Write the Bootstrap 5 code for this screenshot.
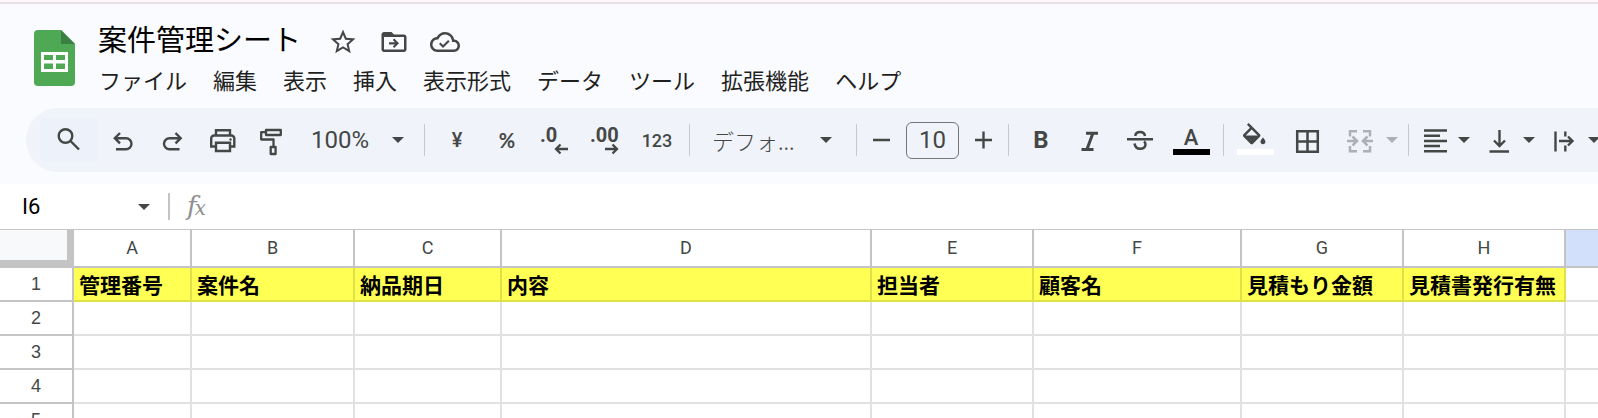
<!DOCTYPE html>
<html lang="ja">
<head>
<meta charset="utf-8">
<meta name="viewport" content="width=device-width, initial-scale=1">
<title>案件管理シート</title>
<link href="https://cdn.jsdelivr.net/npm/bootstrap@5.3.0/dist/css/bootstrap.min.css" rel="stylesheet">
<style>
  :root { --ink: #444746; --line: #c4c4c4; --grid: #e1e1e1; }
  body { font-family: Roboto, "Noto Sans CJK JP", sans-serif; height: 100vh; background: #fff; color: #1f1f1f; }
  button { border: 0; background: none; padding: 0; color: inherit; }
  svg { display: block; overflow: visible; flex: none; }
  .topline { height: 4px; background: #fdf6fa; border-bottom: 2px solid #eadfe5; }
  .app-head { background: #fafbfe; padding-bottom: 12px; }
  .doc-head { padding: 14px 34px 11px; gap: 23px; }
  .doc-title { font-family: "Noto Sans CJK JP", sans-serif; font-size: 29px; line-height: 40px; font-weight: 400; margin: 0 27px 0 0; color: #000; }
  .doc-icons { gap: 21px; color: var(--ink); }
  .menus { gap: 26px; height: 36px; padding-left: 1px; margin-top: 3px; }
  .menus button { font-family: "Noto Sans CJK JP", sans-serif; font-size: 22px; line-height: 36px; white-space: nowrap; }
  .tools { height: 64px; margin-left: 26px; padding-left: 14px; background: #f0f3f9; border-radius: 32px 0 0 32px; color: var(--ink); }
  .tools > * { flex: none; }
  .tool { width: 50px; height: 44px; display: flex; align-items: center; justify-content: center; font-size: 20px; font-weight: 500; }
  .tool-search { width: 58px; background: #edf1fa; border-radius: 4px; }
  .tool-step { width: 35px; }
  .tool-b { font-size: 24px; font-weight: 700; }
  .tool-pct { font-family: Lato, sans-serif; font-weight: 700; }
  .tool-num { font-size: 18px; }
  .divider { width: 1px; height: 32px; background: #c7c9cc; margin: 0 7px; }
  .drop { display: flex; align-items: center; justify-content: space-between; height: 44px; }
  .drop-zoom { width: 119px; padding: 0 13px; font-size: 24px; }
  .drop-font { width: 152px; padding: 0 17px 0 15px; font-family: "Noto Sans CJK JP", sans-serif; font-size: 22px; font-weight: 300; }
  .drop-merge { width: 70px; padding: 0 3px 0 14px; opacity: .38; }
  .drop-icon { width: 65px; padding: 0 11px 0 5px; }
  .caret { width: 0; height: 0; border: 6px solid transparent; border-top-color: var(--ink); border-bottom: 0; }
  .size-box { width: 53px; height: 37px; margin: 0 7px; border: 1px solid #747775; border-radius: 6px; background: none; text-align: center; font-size: 24px; color: var(--ink); padding: 0; }
  .formula { height: 46px; border-bottom: 1px solid var(--line); padding-left: 22px; }
  .cell-name { width: 116px; border: 0; padding: 0; font-size: 22px; color: #000; background: none; }
  .bar-sep { width: 2px; height: 27px; margin: 0 17px 0 18px; background: var(--line); }
  .fx { font: italic 26px/28px "DejaVu Serif", serif; color: #8f8f8f; }
  .fx span { font-size: 20px; margin-left: -2px; }
  .formula-text { border: 0; background: none; }
  .sheet { table-layout: fixed; width: 100%; border-collapse: separate; border-spacing: 0; color: #000; }
  .sheet th, .sheet td { border: 0 solid var(--grid); border-width: 0 2px 2px 0; height: 34px; padding: 0; overflow: hidden; white-space: nowrap; }
  .sheet th { border-color: var(--line); text-align: center; font-size: 18px; line-height: 24px; font-weight: 400; color: var(--ink); font-family: "Liberation Sans", sans-serif; }
  .sheet thead th { height: 38px; font-family: Roboto, sans-serif; }
  .sheet .corner { background: #f8f9fb; border-width: 0 7px 8px 0; }
  .sheet .picked { background: #d3e0fb; }
  .sheet tr > :last-child { border-right-width: 0; }
  .sheet .head-cell { background: #ffff54; border-color: #e0e048; font-family: "Noto Sans CJK JP", sans-serif; font-size: 21px; line-height: 24px; font-weight: 700; padding-left: 5px; }
  .w-n { width: 74px; } .w-a { width: 118px; } .w-b { width: 163px; } .w-c { width: 147px; }
  .w-d { width: 370px; } .w-e { width: 162px; } .w-f { width: 208px; }
</style>
</head>
<body class="overflow-hidden">
<div class="topline"></div>
<header class="app-head">
  <div class="doc-head d-flex align-items-center">
    <a href="#" aria-label="スプレッドシート ホーム">
      <svg width="41" height="56" viewBox="0 0 41 56">
        <path fill="#4fa954" d="M4 0H27L41 14V52a4 4 0 0 1-4 4H4a4 4 0 0 1-4-4V4a4 4 0 0 1 4-4z"/>
        <path fill="#3b8040" d="M27 0L41 14H27z"/>
        <path fill="#fff" fill-rule="evenodd" d="M7 22H34V42H7zM10 25V30H19V25zM22 25V30H31V25zM10 33.500V39H19V33.500zM22 33.500V39H31V33.500z"/>
      </svg>
    </a>
    <div>
      <div class="d-flex align-items-center">
        <h1 class="doc-title">案件管理シート</h1>
        <div class="doc-icons d-flex mt-2">
          <button type="button" aria-label="スター"><svg width="30" height="30" viewBox="0 0 24 24" fill="currentColor"><path d="M22 9.240l-7.190-.62L12 2 9.190 8.630 2 9.240l5.460 4.730L5.820 21 12 17.270 18.180 21l-1.630-7.030L22 9.240zM12 15.400l-3.760 2.270 1-4.280-3.320-2.880 4.380-.38L12 6.100l1.710 4.040 4.380.38-3.320 2.880 1 4.280L12 15.400z"/></svg></button>
          <button type="button" aria-label="移動"><svg width="30" height="30" viewBox="0 0 24 24" fill="currentColor"><path d="M20 6h-8l-2-2H4c-1.100 0-2 .9-2 2v12c0 1.100.9 2 2 2h16c1.100 0 2-.9 2-2V8c0-1.100-.9-2-2-2zm0 12H4V8h16v10zM12.200 16.800L16 13l-3.800-3.800-1.200 1.200 1.700 1.700H8v1.800h4.700L11 15.600z"/></svg></button>
          <button type="button" aria-label="保存状況"><svg width="30" height="30" viewBox="0 0 24 24" fill="currentColor"><path d="M19.350 10.040C18.670 6.590 15.640 4 12 4 9.110 4 6.610 5.640 5.360 8.040 2.350 8.360 0 10.900 0 14c0 3.310 2.690 6 6 6h13c2.760 0 5-2.240 5-5 0-2.640-2.050-4.780-4.650-4.960zM19 18H6c-2.210 0-4-1.790-4-4 0-2.050 1.530-3.760 3.560-3.970l1.070-.11.5-.95C8.080 7.140 9.940 6 12 6c2.620 0 4.880 1.860 5.390 4.430l.3 1.500 1.530.11c1.560.1 2.780 1.410 2.780 2.960 0 1.650-1.350 3-3 3zm-8.600-3.600l-2-2-1.200 1.200 3.200 3.200 5.300-5.300-1.200-1.200z"/></svg></button>
        </div>
      </div>
      <nav class="menus d-flex" aria-label="メニュー">
        <button type="button">ファイル</button><button type="button">編集</button><button type="button">表示</button><button type="button">挿入</button><button type="button">表示形式</button><button type="button">データ</button><button type="button">ツール</button><button type="button">拡張機能</button><button type="button">ヘルプ</button>
      </nav>
    </div>
  </div>

  <div class="tools d-flex align-items-center overflow-hidden" role="toolbar" aria-label="ツールバー">
    <button type="button" class="tool tool-search" aria-label="検索"><svg width="30" height="30" fill="none" stroke="currentColor" stroke-width="2.400"><circle cx="11.500" cy="11" r="6.800"/><path d="M16.500 16L25 24.500"/></svg></button>
    <button type="button" class="tool" aria-label="元に戻す"><svg width="30" height="30" fill="none" stroke="currentColor" stroke-width="2.400"><path d="M12 8L6.800 13.200L12 18.400M7 13.200H18a5.500 5.500 0 0 1 0 11H8"/></svg></button>
    <button type="button" class="tool" aria-label="やり直し"><svg width="30" height="30" fill="none" stroke="currentColor" stroke-width="2.400"><path d="M17.500 8L22.700 13.200L17.500 18.400M22.500 13.200H11.500a5.500 5.500 0 0 0 0 11H21.500"/></svg></button>
    <button type="button" class="tool" aria-label="印刷"><svg width="30" height="30" fill="none" stroke="currentColor" stroke-width="2.400"><path d="M8 10.500V5.200H22V10.500M8 21.500H3.200V13.500a3 3 0 0 1 3-3H23.300a3 3 0 0 1 3 3V21.500H22M8 17.800H22V26H8z"/><circle cx="22.500" cy="14.500" r="1.200" fill="currentColor" stroke="none"/></svg></button>
    <button type="button" class="tool" aria-label="書式をコピー"><svg width="30" height="30" fill="none" stroke="currentColor" stroke-width="2.300"><path d="M8 5H22.800V10H8zM8 7.200H3.200V14.500H15.500V21.500M12.700 22H17.600V29H12.700z" stroke-linejoin="round"/></svg></button>
    <button type="button" class="drop drop-zoom">100%<i class="caret"></i></button>
    <span class="divider"></span>
    <button type="button" class="tool">¥</button>
    <button type="button" class="tool tool-pct">%</button>
    <button type="button" class="tool" aria-label="小数点以下の桁数を減らす"><svg width="30" height="30"><text x="-2" y="17" font-size="20" font-weight="700" fill="currentColor">.0</text><path d="M26 24H14M18.500 19.500L14 24L18.500 28.500" fill="none" stroke="currentColor" stroke-width="2.300"/></svg></button>
    <button type="button" class="tool" aria-label="小数点以下の桁数を増やす"><svg width="30" height="30"><text x="-2" y="17" font-size="20" font-weight="700" fill="currentColor">.00</text><path d="M13 24H25M20.500 19.500L25 24L20.500 28.500" fill="none" stroke="currentColor" stroke-width="2.300"/></svg></button>
    <button type="button" class="tool tool-num">123</button>
    <span class="divider"></span>
    <button type="button" class="drop drop-font">デフォ...<i class="caret"></i></button>
    <span class="divider"></span>
    <button type="button" class="tool tool-step" aria-label="フォントサイズを縮小"><svg width="18" height="18"><path d="M0 9H17" stroke="currentColor" stroke-width="2.400"/></svg></button>
    <input class="size-box" type="text" value="10" aria-label="フォントサイズ">
    <button type="button" class="tool tool-step" aria-label="フォントサイズを拡大"><svg width="18" height="18"><path d="M0 9H17M8.500 .5V17.500" stroke="currentColor" stroke-width="2.400"/></svg></button>
    <span class="divider"></span>
    <button type="button" class="tool tool-b">B</button>
    <button type="button" class="tool" aria-label="斜体"><svg width="30" height="30" fill="none" stroke="currentColor" stroke-width="3"><path d="M10 8.300H22M5.500 24.500H17.500M17 8L10.700 25"/></svg></button>
    <button type="button" class="tool" aria-label="取り消し線"><svg width="30" height="30" fill="none" stroke="currentColor" stroke-width="2.500"><path d="M1 14.300H27M9.300 11C9.800 5.800 18.200 5.800 19 11M8.500 18.500C9.500 25.500 19.500 25.500 19.500 19.300C19.500 18.200 19 17.300 18 16.500"/></svg></button>
    <button type="button" class="tool" aria-label="テキストの色"><svg width="30" height="30"><text x="15" y="20" text-anchor="middle" font-size="22" font-weight="500" fill="currentColor">A</text><rect x="-3" y="24" width="37" height="6" fill="#000"/></svg></button>
    <span class="divider"></span>
    <button type="button" class="tool" aria-label="塗りつぶしの色"><svg width="30" height="30" fill="currentColor"><path transform="translate(-1.800 -2) scale(1.250)" d="M16.560 8.940L7.620 0 6.210 1.410l2.380 2.380-5.150 5.150c-.59.59-.59 1.540 0 2.120l5.500 5.500c.29.29.68.44 1.060.44s.77-.15 1.060-.44l5.500-5.500c.59-.58.59-1.530 0-2.120zM5.210 10L10 5.210 14.790 10H5.210zM19 11.500s-2 2.170-2 3.500c0 1.100.9 2 2 2s2-.9 2-2c0-1.330-2-3.500-2-3.500z"/><rect x="-4" y="24" width="37" height="6" fill="#fff"/></svg></button>
    <button type="button" class="tool" aria-label="枠線"><svg width="30" height="30" fill="none" stroke="currentColor" stroke-width="2.500"><path d="M6.200 6.200H26.800V26.800H6.200zM16.500 6V27M6 16.500H27"/></svg></button>
    <button type="button" class="drop drop-merge" aria-label="セルを結合"><svg width="30" height="30" fill="none" stroke="currentColor" stroke-width="2.500"><path d="M12 6.200H5V11.500M5 21V26.300H12M18 6.200H25V11.500M25 21V26.300H18M2 16H11M7.500 11.500L12 16L7.500 20.500M28 16H19M22.500 11.500L18 16L22.500 20.500"/></svg><i class="caret"></i></button>
    <span class="divider"></span>
    <button type="button" class="drop drop-icon" aria-label="水平方向の配置"><svg width="30" height="30" stroke="currentColor" stroke-width="2.500"><path d="M3 5.500H26M3 10.700H19M3 15.900H26M3 21.100H19M3 26.300H26"/></svg><i class="caret"></i></button>
    <button type="button" class="drop drop-icon" aria-label="垂直方向の配置"><svg width="30" height="30" fill="none" stroke="currentColor" stroke-width="2.400"><path d="M13.500 5V21M8 15.500L13.500 21L19 15.500M3.500 26.500H23"/></svg><i class="caret"></i></button>
    <button type="button" class="drop drop-icon" aria-label="テキストを折り返す"><svg width="30" height="30" fill="none" stroke="currentColor" stroke-width="2.400"><path d="M4.500 6.500V26.500M14.300 6.500V11.500M14.300 20.500V26.500M8 16H21M17 11.500L21.500 16L17 20.500"/></svg><i class="caret"></i></button>
  </div>
</header>

<div class="formula d-flex align-items-center">
  <input class="cell-name" type="text" value="I6" aria-label="名前ボックス">
  <button type="button" aria-label="名前の一覧"><i class="caret d-block"></i></button>
  <span class="bar-sep"></span>
  <label class="fx" for="formula">f<span>x</span></label>
  <input id="formula" class="formula-text flex-grow-1" type="text">
</div>

<table class="sheet">
  <colgroup><col class="w-n"><col class="w-a"><col class="w-b"><col class="w-c"><col class="w-d"><col class="w-e"><col class="w-f"><col class="w-e"><col class="w-e"><col></colgroup>
  <thead>
    <tr><th class="corner"></th><th>A</th><th>B</th><th>C</th><th>D</th><th>E</th><th>F</th><th>G</th><th>H</th><th class="picked"></th></tr>
  </thead>
  <tbody>
    <tr><th>1</th><td class="head-cell">管理番号</td><td class="head-cell">案件名</td><td class="head-cell">納品期日</td><td class="head-cell">内容</td><td class="head-cell">担当者</td><td class="head-cell">顧客名</td><td class="head-cell">見積もり金額</td><td class="head-cell">見積書発行有無</td><td></td></tr>
    <tr><th>2</th><td></td><td></td><td></td><td></td><td></td><td></td><td></td><td></td><td></td></tr>
    <tr><th>3</th><td></td><td></td><td></td><td></td><td></td><td></td><td></td><td></td><td></td></tr>
    <tr><th>4</th><td></td><td></td><td></td><td></td><td></td><td></td><td></td><td></td><td></td></tr>
    <tr><th>5</th><td></td><td></td><td></td><td></td><td></td><td></td><td></td><td></td><td></td></tr>
  </tbody>
</table>
<script src="https://cdn.jsdelivr.net/npm/bootstrap@5.3.0/dist/js/bootstrap.bundle.min.js"></script>
</body>
</html>
